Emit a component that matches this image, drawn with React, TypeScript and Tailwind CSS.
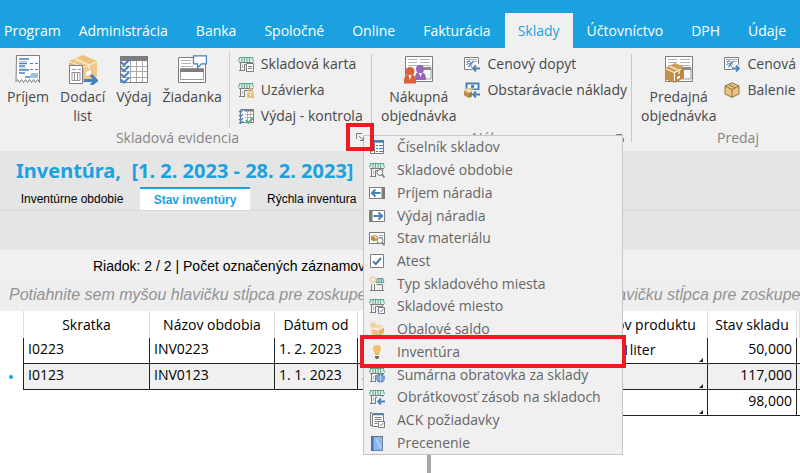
import type { ReactNode } from "react"

const GREY = "#7d7d7d"
const BLUE = "#4a7fbd"
const TEAL = "#5fa88c"
const GOLD = "#ecc27d"
const BROWN = "#c08f48"

// ---- Small 16px icons ----

function Svg({ children }: { children: ReactNode }) {
  return (
    <svg viewBox="0 0 16 16" className="h-4 w-4 shrink-0" fill="none" aria-hidden="true">
      {children}
    </svg>
  )
}

function StoreBase() {
  return (
    <>
      <path d="M1 1.500h14l1 4H0z" fill="#dcebe5" />
      <path d="M1 1.500h14M1.500 2L.5 5.500M4 2v4M6.500 2v4M9 2v4M11.500 2v4M14.500 2l1 3.500" stroke={TEAL} />
      <path d="M1 6.500h14M2.500 7v7M1 14.500h6M6.500 8.500v6M6.500 8.500h7V7" stroke={GREY} />
      <path d="M4.500 9v3" stroke="#b5b5b5" />
    </>
  )
}

function ArrowLeftBadge() {
  return (
    <>
      <path d="M8 8h8v8H8z" fill="#f0f0f0" />
      <path d="M16 12.500H9.500M12 9.500l-3 3 3 3" stroke={BLUE} strokeWidth="1.800" />
    </>
  )
}

function SaveBadge() {
  return (
    <>
      <path d="M9.500 9.500h6v6h-6z" fill="#fff" stroke={GREY} />
      <path d="M11 12.500l1.200 1.200 2.300-3" stroke={BLUE} />
    </>
  )
}

function SearchBadge() {
  return (
    <>
      <circle cx="11" cy="10.500" r="3" fill="#f4f8fa" stroke={GREY} />
      <path d="M13 12.500l2.500 3" stroke={GREY} strokeWidth="1.600" />
    </>
  )
}

const StoreCard = () => (
  <Svg>
    <StoreBase />
    <path d="M8.500 7.500h7v8h-7z" fill="#fff" stroke={GREY} />
    <path d="M10 10.500h4M10 12.500h4" stroke={GREY} />
  </Svg>
)

const StoreLock = () => (
  <Svg>
    <StoreBase />
    <path d="M10.500 11V9a2 2 0 014 0v2" stroke={GOLD} strokeWidth="1.400" />
    <path d="M9 10.500h7V16H9z" fill={GOLD} />
    <path d="M12.500 12v2" stroke="#fff" />
  </Svg>
)

const CheckTable = () => (
  <Svg>
    <path d="M2.500 1.500h13v13h-13z" fill="#fff" stroke={GREY} />
    <path d="M6 2.500h9" stroke={GREY} strokeWidth="2" />
    <path d="M7 6.500h8M7 9.500h8M9.500 3v11M12.500 3v11" stroke="#b0b0b0" />
    <path d="M1 3l1.500 1.500L5 2M1 7l1.500 1.500L5 6M1 11l1.500 1.500L5 10M1 14.500l1.500 1L5 13" stroke={BLUE} strokeWidth="1.300" />
    <path d="M8 12l2.500 3L15 10" stroke={TEAL} strokeWidth="2" />
  </Svg>
)

const PriceBase = () => (
  <>
    <path d="M.5 1.500h14v12H.5z" fill="#fff" stroke={GREY} />
    <path d="M2 3.500h11M2 5.500h3M10 5.500h3M2 8.500h2" stroke="#aaa" />
    <path d="M4.500 11l5-6" stroke={BLUE} strokeWidth="1.300" />
    <circle cx="5" cy="6.500" r="1.500" stroke={BLUE} />
    <circle cx="9" cy="10.500" r="1.500" stroke={BLUE} />
  </>
)

const PriceIn = () => (
  <Svg>
    <PriceBase />
    <ArrowLeftBadge />
  </Svg>
)

const PriceOut = () => (
  <Svg>
    <PriceBase />
    <path d="M8 9h8v7H8z" fill="#f0f0f0" />
    <path d="M8 12.500h6.500M12 9.500l3 3-3 3" stroke={BLUE} strokeWidth="1.800" />
  </Svg>
)

const MoneyBox = () => (
  <Svg>
    <path d="M2.500 1.500h12v6h-12z" fill="#fff" stroke={BLUE} strokeWidth="2" />
    <circle cx="8.500" cy="4.500" r="1.800" fill={BLUE} />
    <path d="M0 8l5-2.500L10 8l-5 2.500z" fill={GOLD} />
    <path d="M0 8.500l5 2.500v5l-5-2.500z" fill={BROWN} />
    <path d="M5 11l5-2.500v5L5 16z" fill="#a97b3a" />
    <path d="M2 7l5 2.500" stroke="#fff" />
    <ArrowLeftBadge />
  </Svg>
)

const Package = () => (
  <Svg>
    <path d="M8 .8l7 3.200v8L8 15.300 1 12V4z" fill={GOLD} stroke="#8b7347" />
    <path d="M1 4l7 3.500L15 4M8 7.500v7.800M4.500 2.500l7 3.500" stroke="#8b7347" />
  </Svg>
)

const ListIcon = () => (
  <Svg>
    <path d="M1.500 1.500h13v13h-13z" fill="#fff" stroke={GREY} />
    <path d="M1 2.500h14" stroke={BLUE} strokeWidth="2.500" />
    <path d="M5.500 4v10" stroke={GREY} />
    <path d="M2 6.500h2M2 9.500h2M2 12.500h2" stroke="#aaa" />
    <path d="M7 6.500h2M10 6.500h4M7 9.500h2M10 9.500h4M7 12.500h2M10 12.500h4" stroke={BLUE} />
  </Svg>
)

const StoreSearch = () => (
  <Svg>
    <StoreBase />
    <SearchBadge />
  </Svg>
)

const ToolIn = () => (
  <Svg>
    <path d="M.5 2.500h15v11H.5z" fill="#fff" stroke={GREY} />
    <path d="M12.500 2h3.500v12h-3.500z" fill={GREY} />
    <path d="M11.500 8H3M6.500 4.500L3 8l3.500 3.500" stroke={BLUE} strokeWidth="2" />
  </Svg>
)

const ToolOut = () => (
  <Svg>
    <path d="M.5 2.500h15v11H.5z" fill="#fff" stroke={GREY} />
    <path d="M0 2h3.500v12H0z" fill={GREY} />
    <path d="M4.500 8H13M9.500 4.500L13 8l-3.500 3.500" stroke={BLUE} strokeWidth="2" />
  </Svg>
)

const MaterialState = () => (
  <Svg>
    <path d="M.5 2.500h15v11H.5z" fill="#fff" stroke={GREY} />
    <path d="M2 6l3-1.500L8.500 6v4L5 11.500 2 10z" fill={BROWN} />
    <path d="M3.500 5.500L7 7v2" stroke="#fff" />
    <path d="M10 5.500h4M10 7.500h4" stroke="#aaa" />
    <SearchBadge />
  </Svg>
)

const CheckBoxIcon = () => (
  <Svg>
    <path d="M1.500 1.500h13v13h-13z" fill="#fff" stroke={GREY} />
    <path d="M4 8.500L6.800 11 12 5" stroke={BLUE} strokeWidth="2.200" />
  </Svg>
)

const NewStore = () => (
  <Svg>
    <path d="M8 2.500h6l1 4H7z" fill="#bddccf" stroke={TEAL} />
    <path d="M10 3v3M12.500 3v3" stroke={TEAL} />
    <path d="M2.500 8.500v6M1 14.500h14M5.500 8v6M7.500 8.500h6v6" stroke={GREY} />
    <path d="M4 0v8M0 4h8M1.200 1.200l5.600 5.600M6.800 1.200L1.200 6.800" stroke={GOLD} />
    <circle cx="4" cy="4" r="1.200" fill="#fff" />
  </Svg>
)

const StoreSave = () => (
  <Svg>
    <StoreBase />
    <SaveBadge />
  </Svg>
)

const BoxNew = () => (
  <Svg>
    <path d="M4 6l5-3 6 2-5 3z" fill="#f4d9a9" />
    <path d="M2.500 8l7 1.500V15l-7-2z" fill={GOLD} />
    <path d="M10 9.500l5-3V12l-5 3z" fill="#e3b264" />
    <path d="M4 .5v7M.5 4h7M1.500 1.500l5 5M6.500 1.500l-5 5" stroke={GOLD} />
  </Svg>
)

const Bulb = () => (
  <Svg>
    <path d="M8 1a4 4 0 00-4 4c0 2 1.700 3 2 6h4c.3-3 2-4 2-6a4 4 0 00-4-4z" fill="#ecc06e" />
    <path d="M6 12h4v1.500L9 15H7l-1-1.500z" fill="#6e6e6e" />
  </Svg>
)

const StoreGlobe = () => (
  <Svg>
    <StoreBase />
    <circle cx="11.500" cy="11" r="4.500" fill={BLUE} />
    <path d="M7 11h9M11.500 6.500v9M8 8.500c2 1.200 5 1.200 7 0M8 13.500c2-1.200 5-1.200 7 0" stroke="#dbe8f5" strokeWidth=".7" />
  </Svg>
)

const StoreBack = () => (
  <Svg>
    <StoreBase />
    <ArrowLeftBadge />
  </Svg>
)

const Requests = () => (
  <Svg>
    <path d="M3 .5H1.500v13H3" stroke={GREY} />
    <path d="M3.500 1.500h11v13h-11z" fill="#fff" stroke={GREY} />
    <path d="M4 2.500h10" stroke={BLUE} strokeWidth="1.500" />
    <path d="M5.500 5.500h7M5.500 7.500h7M5.500 9.500h4M5.500 11.500h3" stroke={GREY} />
    <SaveBadge />
  </Svg>
)

const Notebook = () => (
  <Svg>
    <path d="M2.500 1.500h11v14h-11z" fill="#8bb6f5" stroke="#7484a0" />
    <path d="M2 1h2.500v15H2z" fill="#4a73b5" />
    <path d="M5 1.500h9" stroke="#6b5a48" strokeDasharray="1 1" />
    <path d="M7 4l5 9" stroke="#b4d0fb" strokeWidth="2" />
  </Svg>
)

// ---- Large 30px ribbon icons ----

function Big({ children }: { children: ReactNode }) {
  return (
    <svg viewBox="0 0 30 30" className="h-[30px] w-[30px] shrink-0" fill="none" aria-hidden="true">
      {children}
    </svg>
  )
}

const ReceiptIcon = () => (
  <Big>
    <path d="M3.500 .5h23v27l-2-3-2 3-2-3-2 3-2-3-2 3-2-3-2 3-2-3-2 3-2-3-1.500 2z" fill="#fff" stroke={GREY} />
    <path d="M6 4h10M6 8.500h8M6 11h6M6 15h10M6 18h6M12 22h5" stroke={BLUE} strokeWidth="1.500" />
    <path d="M17 8.500h3M22 8.500h3M17 14.500h3M22 14.500h3M18 19h7" stroke={BLUE} strokeWidth="1.200" />
    <path d="M17 20h8v3h-8z" fill="#9fbfe0" />
    <path d="M6 6.500h8M6 13h7" stroke="#a9c4e0" />
  </Big>
)

const DeliveryIcon = () => (
  <Big>
    <path d="M1 6L15 0l14 6-13 6z" fill={GOLD} />
    <path d="M1 7l15 6v14L1 22z" fill="#e9bc77" />
    <path d="M16 13l13-6v15l-13 6z" fill="#efc98b" />
    <path d="M7 4l14 6v4" stroke="#f7e4c3" strokeWidth="2" />
    <path d="M18 17l5-2v4l-5 2z" fill="#fff" />
    <path d="M1.500 10.500h13v18h-13z" fill="#fff" stroke={GREY} />
    <path d="M4 14.500h4M10 14.500h3M4 17.500h8v8H4zM6.500 18v7M9.500 18v7" stroke="#929292" />
    <path d="M16 25.500h12M23 20l5.500 5.500L23 30" stroke={BLUE} strokeWidth="3" />
  </Big>
)

const IssueIcon = () => (
  <Big>
    <path d="M1.500 1.500h27v26h-27z" fill="#fff" stroke={GREY} />
    <path d="M1 1h28v5H1z" fill={GREY} />
    <path d="M2 11.500h26M2 16.500h26M2 22.500h26M11.500 6v21M17.500 6v21M23.500 6v21" stroke="#a8a8a8" />
    <path d="M2 7l3 3 5-5M2 13l3 3 5-5M2 19l3 3 5-5M2 24.500l3 3 5-5" stroke={BLUE} strokeWidth="2" />
  </Big>
)

const RequestIcon = () => (
  <Big>
    <path d="M1.500 2.500h27v25h-27z" fill="#fff" stroke={GREY} />
    <path d="M4 5.500h10M4 8.500h10M4 11.500h12" stroke="#b5b5b5" />
    <path d="M3.500 13.500h23v11h-23z" stroke="#999" />
    <path d="M3 14h24v3H3z" fill={GREY} />
    <path d="M16.500 .8h13v8h-5l-4 4v-4h-4z" fill="#fff" stroke={BLUE} strokeWidth="1.300" />
  </Big>
)

function NewsBase() {
  return (
    <>
      <path d="M1.500 1.500h27v25h-27z" fill="#fff" stroke={GREY} />
      <path d="M4 4.500h9M16 4.500h10M4 7.500h9M16 7.500h10M4 10.500h22M22 22.500h5" stroke="#b0b0b0" />
      <path d="M18 13h9v11h-9z" fill="#f5f5f5" stroke="#999" />
      <path d="M17 12h10v3H17z" fill="#8a8a8a" />
    </>
  )
}

const PurchaseOrderIcon = () => (
  <Big>
    <NewsBase />
    <path d="M11 25c0-6 1-8 5-8s6 2 6 8z" fill="#9866bd" />
    <circle cx="16" cy="14" r="4" fill="#9866bd" />
    <path d="M15 18h3l-1.500 4z" fill="#fff" />
    <path d="M0 28.500c0-7 1-9 6-9s6 2 6 9z" fill="#d9603b" />
    <circle cx="6" cy="16.500" r="4.500" fill="#d9603b" />
    <path d="M4.500 20h3L6 25z" fill="#fff" />
  </Big>
)

const SalesOrderIcon = () => (
  <Big>
    <NewsBase />
    <path d="M1 13l10-5 9 4-10 5z" fill="#cd9d55" />
    <path d="M1 14l9 4v10l-9-4z" fill={BROWN} />
    <path d="M11 18l9-5v10l-9 5z" fill="#b98840" />
    <path d="M5 11l10 4.500v3.500" stroke="#f3dfbd" strokeWidth="1.500" />
    <path d="M13 22l3-1.500v2.500l-3 1.500z" fill="#fff" />
  </Big>
)

const LauncherIcon = () => (
  <svg viewBox="0 0 8 8" className="h-2 w-2" fill="none" stroke={GREY} aria-hidden="true">
    <path d="M.5 6V.5H6M3 3l4 4M7.500 4v3.500H4" />
  </svg>
)

const tabs = [
  "Program",
  "Administrácia",
  "Banka",
  "Spoločné",
  "Online",
  "Fakturácia",
  "Sklady",
  "Účtovníctvo",
  "DPH",
  "Údaje",
]

const menuItems = [
  { icon: ListIcon, label: "Číselník skladov" },
  { icon: StoreSearch, label: "Skladové obdobie" },
  { icon: ToolIn, label: "Príjem náradia" },
  { icon: ToolOut, label: "Výdaj náradia" },
  { icon: MaterialState, label: "Stav materiálu" },
  { icon: CheckBoxIcon, label: "Atest" },
  { icon: NewStore, label: "Typ skladového miesta" },
  { icon: StoreSave, label: "Skladové miesto" },
  { icon: BoxNew, label: "Obalové saldo" },
  { icon: Bulb, label: "Inventúra", highlighted: true },
  { icon: StoreGlobe, label: "Sumárna obratovka za sklady" },
  { icon: StoreBack, label: "Obrátkovosť zásob na skladoch" },
  { icon: Requests, label: "ACK požiadavky" },
  { icon: Notebook, label: "Precenenie" },
]

const periods = [
  { code: "I0223", name: "INV0223", from: "1. 2. 2023", to: "28. 2. 2023" },
  { code: "I0123", name: "INV0123", from: "1. 1. 2023", to: "31. 1. 2023", current: true },
]

const stock = [
  { product: "Sirup 1liter", amount: "50,000" },
  { product: "", amount: "117,000", current: true },
  { product: "", amount: "98,000" },
]

function BigButton({ icon: Icon, lines }: { icon: () => ReactNode; lines: string[] }) {
  return (
    <button className="flex shrink-0 flex-col items-center text-sm leading-[19px] text-[#484848]">
      <Icon />
      <span className="mt-0.5">
        {lines.map((line) => (
          <span key={line} className="block">
            {line}
          </span>
        ))}
      </span>
    </button>
  )
}

function SmallButton({ icon: Icon, label }: { icon: () => ReactNode; label: string }) {
  return (
    <button className="flex h-[26px] items-center gap-[7px] text-sm whitespace-nowrap text-[#484848]">
      <Icon />
      {label}
    </button>
  )
}

function Separator() {
  return <div className="mt-1.5 h-[88px] w-px shrink-0 bg-[#c8c8c8]" />
}

function DropdownMenu() {
  return (
    <ul
      role="menu"
      className="absolute top-full left-0 z-10 flex h-80 w-[260px] flex-col border border-[#c6c6c6] bg-[#f0f0f0]"
    >
      {menuItems.map((item) => (
        <li key={item.label} role="none" className="relative flex-1">
          <button
            role="menuitem"
            className="flex h-full w-full items-center gap-3 pl-[5px] text-sm whitespace-nowrap text-[#666]"
          >
            <item.icon />
            {item.label}
          </button>
          {item.highlighted && (
            <span className="pointer-events-none absolute -inset-x-1 -inset-y-[5px] border-4 border-[#ed1c24]" />
          )}
        </li>
      ))}
    </ul>
  )
}

function Ribbon() {
  return (
    <div className="flex h-[103px] bg-[#f0f0f0]">
      <section className="w-[371px] shrink-0">
        <div className="flex h-20 gap-[11px] pt-[7px] pl-[7px]">
          <BigButton icon={ReceiptIcon} lines={["Príjem"]} />
          <BigButton icon={DeliveryIcon} lines={["Dodací", "list"]} />
          <BigButton icon={IssueIcon} lines={["Výdaj"]} />
          <BigButton icon={RequestIcon} lines={["Žiadanka"]} />
          <div className="-mt-1 -ml-1 h-[77px] border-l border-[#d0d0d0] pl-2">
            <SmallButton icon={StoreCard} label="Skladová karta" />
            <SmallButton icon={StoreLock} label="Uzávierka" />
            <SmallButton icon={CheckTable} label="Výdaj - kontrola" />
          </div>
        </div>
        <div className="relative">
          <h2 className="pr-4 text-center text-sm text-[#858585]">Skladová evidencia</h2>
          <button
            aria-label="Ďalšie agendy skladu"
            className="absolute -top-[5px] -right-[3px] z-20 flex h-7 w-7 items-center justify-center border-4 border-[#ed1c24]"
          >
            <LauncherIcon />
          </button>
        </div>
      </section>
      <Separator />
      <section className="w-[259px] shrink-0">
        <div className="flex h-20 gap-2 pt-[7px] pl-[9px]">
          <BigButton icon={PurchaseOrderIcon} lines={["Nákupná", "objednávka"]} />
          <div className="-mt-1">
            <SmallButton icon={PriceIn} label="Cenový dopyt" />
            <SmallButton icon={MoneyBox} label="Obstarávacie náklady" />
          </div>
        </div>
        <div className="relative">
          <h2 className="pr-4 text-center text-sm text-[#858585]">Nákup</h2>
          <button aria-label="Ďalšie agendy nákupu" className="absolute top-1.5 right-[7px]">
            <LauncherIcon />
          </button>
        </div>
      </section>
      <Separator />
      <section className="w-[212px] shrink-0">
        <div className="flex h-20 gap-2 pt-[7px] pl-[9px]">
          <BigButton icon={SalesOrderIcon} lines={["Predajná", "objednávka"]} />
          <div className="-mt-1">
            <SmallButton icon={PriceOut} label="Cenová ponuka" />
            <SmallButton icon={Package} label="Balenie" />
          </div>
        </div>
        <h2 className="text-center text-sm text-[#858585]">Predaj</h2>
      </section>
    </div>
  )
}

const groupHint = "Potiahnite sem myšou hlavičku stĺpca pre zoskupenie"
const head = "h-[27px] border-r border-[#ddd] p-0 text-center font-normal"
const cell = "h-[26px] overflow-hidden border-r border-b border-[#222] px-1 py-0 align-top whitespace-nowrap"

export default function App() {
  return (
    <div className="min-h-screen overflow-hidden bg-white font-['Open_Sans',sans-serif] text-black">
      <nav className="flex h-12 items-end bg-[#1ba1df] text-sm text-white">
        {tabs.map((tab) => (
          <a
            key={tab}
            href="#"
            className={
              tab === "Sklady"
                ? "flex h-[35px] shrink-0 items-center bg-[#f0f0f0] px-[13px] text-[#1ba1df]"
                : "flex h-[35px] shrink-0 items-center px-[14px] first:pr-1 first:pl-1"
            }
          >
            {tab}
          </a>
        ))}
      </nav>

      <div className="relative">
        <Ribbon />
        {/* Opened from the launcher in the corner of the first group */}
        <div className="absolute top-[87px] left-[363px]">
          <DropdownMenu />
        </div>
      </div>

      <header className="h-[99px] bg-[#e5e5e5]">
        <h1 className="h-9 pt-1 pl-4 font-['Noto_Sans',sans-serif] text-xl leading-8 font-bold whitespace-pre text-[#1ba1df]">
          Inventúra,  [1. 2. 2023 - 28. 2. 2023]
        </h1>
        <div className="flex h-6 items-stretch border-b border-[#d8d8d8] pl-1 font-['Liberation_Sans',sans-serif] text-xs">
          <button className="w-[136px]">Inventúrne obdobie</button>
          <button className="w-[110px] border-t-2 border-[#1ba1df] bg-white font-bold text-[#1ba1df]">
            Stav inventúry
          </button>
          <button className="px-[17px]">Rýchla inventura</button>
        </div>
      </header>

      <p className="h-[29px] bg-[#f1f1f1] pl-[93px] font-['Liberation_Sans',sans-serif] text-sm leading-8">
        Riadok: 2 / 2 | Počet označených záznamov: 0
      </p>

      <main className="flex">
        <section className="w-[427px] shrink-0 overflow-hidden">
          <p className="h-8 bg-[#eee] pl-[9px] font-['Liberation_Sans',sans-serif] text-base leading-8 whitespace-nowrap text-[#939393] italic">
            {groupHint}
          </p>
          <table className="w-[448px] table-fixed border-separate border-spacing-0 text-sm leading-[22px]">
            <colgroup>
              <col className="w-6" />
              <col className="w-[126px]" />
              <col className="w-[125px]" />
              <col className="w-[83px]" />
              <col />
            </colgroup>
            <thead>
              <tr>
                <th className={head} />
                <th className={head}>Skratka</th>
                <th className={head}>Názov obdobia</th>
                <th className={head}>Dátum od</th>
                <th className={head}>Dátum do</th>
              </tr>
            </thead>
            <tbody>
              {periods.map((period) => (
                <tr key={period.code} className={period.current ? "bg-[#f0f0f0]" : "bg-white"}>
                  <td className="border-r border-[#222] bg-white p-0">
                    {period.current && <span className="ml-[9px] block h-1 w-1 rounded-full bg-[#1ba1df]" />}
                  </td>
                  <td className={cell}>{period.code}</td>
                  <td className={cell}>{period.name}</td>
                  <td className={cell}>{period.from}</td>
                  <td className={cell}>{period.to}</td>
                </tr>
              ))}
            </tbody>
          </table>
        </section>

        <div className="min-h-[194px] w-1 shrink-0 bg-[#a5a5a5]" />

        <section className="min-w-0 flex-1 overflow-hidden">
          <p className="h-8 bg-[#eee] pl-3 font-['Liberation_Sans',sans-serif] text-base leading-8 whitespace-nowrap text-[#939393] italic">
            {groupHint}
          </p>
          <table className="w-full table-fixed border-separate border-spacing-0 text-sm leading-[22px]">
            <colgroup>
              <col />
              <col className="w-32" />
              <col className="w-[89px]" />
              <col className="w-[3px]" />
            </colgroup>
            <thead>
              <tr>
                <th className={head}>Kód</th>
                <th className={head}>Názov produktu</th>
                <th className={head}>Stav skladu</th>
                <th className={head} />
              </tr>
            </thead>
            <tbody>
              {stock.map((row) => (
                <tr key={row.amount} className={row.current ? "bg-[#f0f0f0]" : "bg-white"}>
                  <td className={cell} />
                  <td className={cell}>
                    <div className="flex items-center justify-between">
                      <span>{row.product}</span>
                      <svg viewBox="0 0 4 4" className="mt-5 h-1 w-1">
                        <path d="M4 0v4H0z" fill="#222" />
                      </svg>
                    </div>
                  </td>
                  <td className={`${cell} text-right`}>{row.amount}</td>
                  <td className="border-b border-[#222] p-0" />
                </tr>
              ))}
            </tbody>
          </table>
        </section>
      </main>
    </div>
  )
}
